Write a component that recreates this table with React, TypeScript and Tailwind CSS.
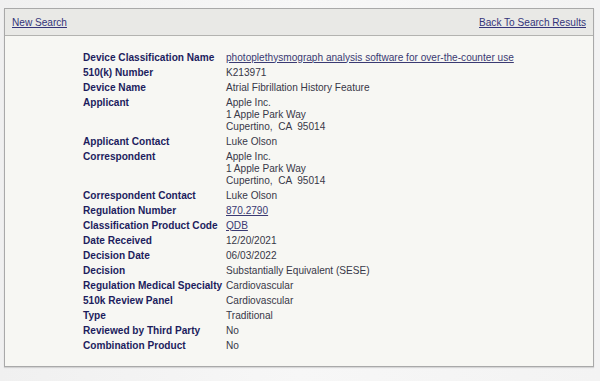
import React from 'react';

type Row = {
  label: string;
  value: string[];
  link?: boolean;
};

const rows: Row[] = [
  { label: 'Device Classification Name', value: ['photoplethysmograph analysis software for over-the-counter use'], link: true },
  { label: '510(k) Number', value: ['K213971'] },
  { label: 'Device Name', value: ['Atrial Fibrillation History Feature'] },
  { label: 'Applicant', value: ['Apple Inc.', '1 Apple Park Way', 'Cupertino,  CA  95014'] },
  { label: 'Applicant Contact', value: ['Luke Olson'] },
  { label: 'Correspondent', value: ['Apple Inc.', '1 Apple Park Way', 'Cupertino,  CA  95014'] },
  { label: 'Correspondent Contact', value: ['Luke Olson'] },
  { label: 'Regulation Number', value: ['870.2790'], link: true },
  { label: 'Classification Product Code', value: ['QDB'], link: true },
  { label: 'Date Received', value: ['12/20/2021'] },
  { label: 'Decision Date', value: ['06/03/2022'] },
  { label: 'Decision', value: ['Substantially Equivalent (SESE)'] },
  { label: 'Regulation Medical Specialty', value: ['Cardiovascular'] },
  { label: '510k Review Panel', value: ['Cardiovascular'] },
  { label: 'Type', value: ['Traditional'] },
  { label: 'Reviewed by Third Party', value: ['No'] },
  { label: 'Combination Product', value: ['No'] },
];

export default function App() {
  return (
    <div
      className="h-[381px] w-full overflow-hidden bg-gradient-to-r from-[#f0f0f0] via-[#f7f7f7] to-[#f3f3f3] pt-[8px] pl-[4px]"
      style={{ fontFamily: '"Liberation Sans", Arial, Helvetica, sans-serif' }}
    >
      <div className="flex h-[359px] w-[590px] flex-col border border-[#a9a9a9] bg-[#f7f7f3] shadow-[0_1px_1px_rgba(0,0,0,0.12)]">
        <div className="flex h-[27px] items-center justify-between border-b border-[#b3b3b0] bg-[#e9e9e6] px-[7px] pt-[1px] text-[10.1px] text-[#34347a]">
          <a href="#" className="underline underline-offset-[1px]">New Search</a>
          <a href="#" className="underline underline-offset-[1px]">Back To Search Results</a>
        </div>

        <div className="pt-[14px] pl-[78px]">
          <div className="grid grid-cols-[143px_1fr] text-[10.1px] leading-[12px]">
            {rows.map((r) => (
              <React.Fragment key={r.label}>
                <div className="py-[1.5px] font-bold whitespace-nowrap text-[#1d1d5e]">{r.label}</div>
                <div className="py-[1.5px] text-[#383848]">
                  {r.value.map((line, i) =>
                    r.link ? (
                      <a key={i} href="#" className="block text-[#3a3a72] underline underline-offset-[1px]">
                        {line}
                      </a>
                    ) : (
                      <div key={i} className="whitespace-pre">
                        {line}
                      </div>
                    )
                  )}
                </div>
              </React.Fragment>
            ))}
          </div>
        </div>
      </div>
    </div>
  );
}
